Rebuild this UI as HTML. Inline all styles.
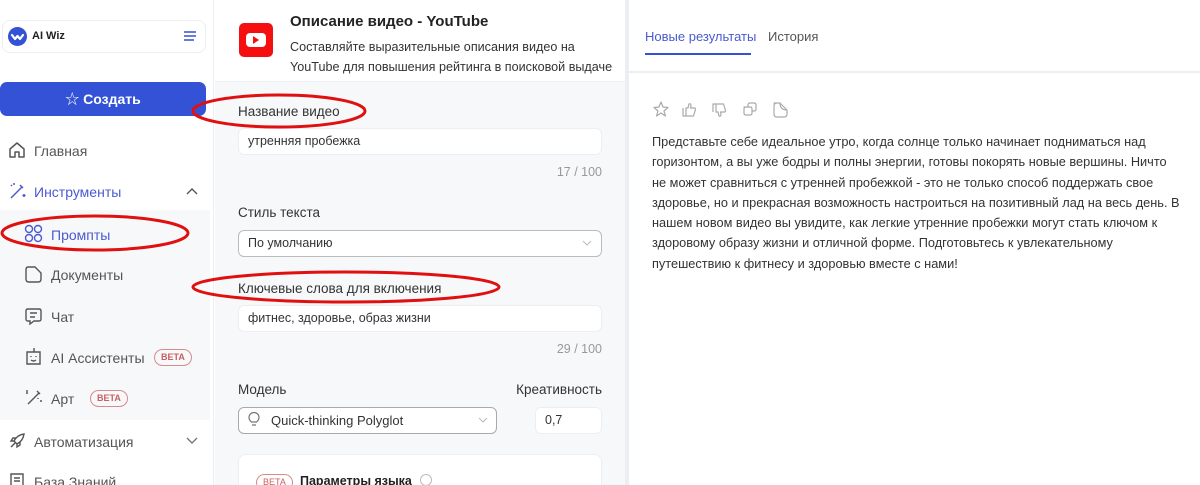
<!DOCTYPE html>
<html style="width:1200px;height:485px;overflow:hidden"><head><meta charset="utf-8"><style>
*{box-sizing:border-box;margin:0;padding:0}
body{width:1200px;height:485px;overflow:hidden;background:#fff;font-family:"Liberation Sans","Noto Sans CJK SC",sans-serif;color:#333;font-size:13px}
#w{position:relative;width:1200px;height:485px;overflow:hidden}
.abs{position:absolute}
.side{left:0;top:0;width:214px;height:485px;background:#fff;border-right:1px solid #eceef2}
.logo{left:2px;top:20px;width:204px;height:33px;border:1px solid #eceef2;border-radius:8px}
.btn{left:0;top:82px;width:206px;height:34px;background:#3452d6;border-radius:7px;color:#fff;font-weight:bold;font-size:14px;text-align:center;line-height:34px}
.sub{left:0;top:210px;width:210px;height:210px;background:#f7f8fa}
.nav{font-size:14px;color:#555}
.beta{border:1px solid #d98a8a;color:#c86060;border-radius:10px;font-size:9px;font-weight:bold;padding:2px 6px;line-height:11px}
.mid{left:215px;top:0;width:410px;height:485px;background:#f7f8fa}
.midh{left:215px;top:0;width:410px;height:82px;background:#fff;border-bottom:1px solid #eceef2}
.lbl{font-size:13.5px;color:#333}
.inp{background:#fff;border:1px solid #eceef2;border-radius:6px;height:27px;font-size:12.5px;color:#333;padding-left:9px;line-height:25px}
.cnt{font-size:12.5px;color:#999;text-align:right}
.div{left:625px;top:0;width:4px;height:485px;background:#eceef2}
.txt{left:652px;top:132px;font-size:12.75px;line-height:20.3px;color:#333}
</style></head><body><div id="w">
<div class="abs side"></div>
<div class="abs logo"></div>
<div class="abs" style="left:8px;top:27px;width:19px;height:19px;border-radius:50%;background:#3452d6"></div>
<svg class="abs" style="left:8px;top:27px" width="19" height="19"><path d="M4 8 L7 12 L9.5 9 L12 12 L15 8" stroke="#fff" stroke-width="2.2" fill="none" stroke-linecap="round" stroke-linejoin="round"/></svg>
<div class="abs" style="left:32px;top:30px;font-size:11px;font-weight:bold;color:#222">AI Wiz</div>
<svg class="abs" style="left:183px;top:30px" width="14" height="12"><path d="M1 2H13M1 6H13M1 10H11" stroke="#3452d6" stroke-width="1.5"/></svg>
<div class="abs btn"><span style="font-weight:normal">☆</span> Создать</div>
<div class="abs sub"></div>
<svg class="abs" style="left:8px;top:141px" width="18" height="18" fill="none" stroke="#555" stroke-width="1.5"><path d="M2 8L9 2L16 8V16H11V11H7V16H2Z" stroke-linejoin="round"/></svg>
<div class="abs nav" style="left:34px;top:143px">Главная</div>
<svg class="abs" style="left:8px;top:182px" width="18" height="18" fill="none" stroke="#4a5ad0" stroke-width="1.5"><path d="M3 16L14 5M12 3l3 3M3 3l1 1M6 1v2M16 12v3M14.5 13.5h3"/></svg>
<div class="abs nav" style="left:34px;top:184px;color:#4a5ad0">Инструменты</div>
<svg class="abs" style="left:186px;top:187px" width="12" height="8"><path d="M1 7L6 2L11 7" stroke="#555" fill="none" stroke-width="1.4"/></svg>
<svg class="abs" style="left:24px;top:224px" width="19" height="19" fill="none" stroke="#4a5ad0" stroke-width="1.4"><circle cx="5" cy="5" r="3.5"/><circle cx="14" cy="5" r="3.5"/><circle cx="5" cy="14" r="3.5"/><circle cx="14" cy="14" r="3.5"/></svg>
<div class="abs nav" style="left:51px;top:227px;color:#4a5ad0">Промпты</div>
<svg class="abs" style="left:24px;top:265px" width="19" height="19" fill="none" stroke="#555" stroke-width="1.4"><path d="M4 2H11L17 8V14Q17 17 14 17H5Q2 17 2 14V5Q2 2 4 2Z"/></svg>
<div class="abs nav" style="left:51px;top:267px">Документы</div>
<svg class="abs" style="left:24px;top:307px" width="19" height="19" fill="none" stroke="#555" stroke-width="1.4"><path d="M4 2H15Q17 2 17 4V12Q17 14 15 14H10L6 17V14H4Q2 14 2 12V4Q2 2 4 2ZM6 6H13M6 10H11"/></svg>
<div class="abs nav" style="left:51px;top:309px">Чат</div>
<svg class="abs" style="left:24px;top:346px" width="19" height="20" fill="none" stroke="#555" stroke-width="1.4"><path d="M10 2V6M3 6H16V18H3ZM7 10v1M12 10v1M7 14Q9.5 16 12 14"/></svg>
<div class="abs nav" style="left:51px;top:350px">AI Ассистенты</div>
<div class="abs beta" style="left:154px;top:349px">BETA</div>
<svg class="abs" style="left:24px;top:388px" width="19" height="19" fill="none" stroke="#555" stroke-width="1.4"><path d="M4 16L15 5M13 3l3 3M2 5h2M3 2v2M16 13h2M14 10v1"/></svg>
<div class="abs nav" style="left:51px;top:391px">Арт</div>
<div class="abs beta" style="left:90px;top:390px">BETA</div>
<svg class="abs" style="left:8px;top:432px" width="18" height="18" fill="none" stroke="#555" stroke-width="1.4"><path d="M3 15L7 11M16 2Q9 3 6 9L9 12Q15 9 16 2ZM6 9H3L5 6H8M9 12V15L12 13V10"/></svg>
<div class="abs nav" style="left:34px;top:434px">Автоматизация</div>
<svg class="abs" style="left:186px;top:437px" width="12" height="8"><path d="M1 1L6 6L11 1" stroke="#777" fill="none" stroke-width="1.4"/></svg>
<svg class="abs" style="left:9px;top:472px" width="16" height="13" fill="none" stroke="#555" stroke-width="1.4"><path d="M2 2H14V16H2ZM5 6H11M5 9H11"/></svg>
<div class="abs nav" style="left:34px;top:474px;height:11px;overflow:hidden;line-height:16px">База Знаний</div>

<div class="abs mid"></div>
<div class="abs midh"></div>
<div class="abs" style="left:239px;top:23px;width:34px;height:34px;background:#f41010;border-radius:5px"></div>
<div class="abs" style="left:246px;top:33px;width:20px;height:14px;background:#fff;border-radius:4px"></div>
<svg class="abs" style="left:253px;top:36px" width="7" height="8"><path d="M0 0L6 4L0 8Z" fill="#f41010"/></svg>
<div class="abs" style="left:290px;top:13px;font-size:15px;font-weight:bold;color:#222">Описание видео - YouTube</div>
<div class="abs" style="left:290px;top:37px;font-size:12.6px;line-height:20px;color:#333">Составляйте выразительные описания видео на<br>YouTube для повышения рейтинга в поисковой выдаче</div>

<div class="abs lbl" style="left:238px;top:104px">Название видео</div>
<div class="abs inp" style="left:238px;top:128px;width:364px">утренняя пробежка</div>
<div class="abs cnt" style="left:500px;top:165px;width:102px">17 / 100</div>
<div class="abs lbl" style="left:238px;top:205px">Стиль текста</div>
<div class="abs inp" style="left:238px;top:230px;width:364px;border-color:#bbb;height:27px">По умолчанию</div>
<svg class="abs" style="left:582px;top:240px" width="10" height="7"><path d="M1 1L5 5L9 1" stroke="#bbb" fill="none"/></svg>
<div class="abs lbl" style="left:238px;top:281px">Ключевые слова для включения</div>
<div class="abs inp" style="left:238px;top:305px;width:364px">фитнес, здоровье, образ жизни</div>
<div class="abs cnt" style="left:500px;top:342px;width:102px">29 / 100</div>
<div class="abs lbl" style="left:238px;top:382px">Модель</div>
<div class="abs lbl" style="left:500px;top:382px;width:102px;text-align:right">Креативность</div>
<div class="abs inp" style="left:238px;top:407px;width:259px;height:27px;border-color:#aaa;padding-left:32px;font-size:13px">Quick-thinking Polyglot</div>
<svg class="abs" style="left:248px;top:412px" width="12" height="16" fill="none" stroke="#777" stroke-width="1.2"><path d="M4 13h4M3.5 10Q1 8 1 5.5A5 5 0 0 1 11 5.5Q11 8 8.5 10Z"/></svg>
<svg class="abs" style="left:478px;top:417px" width="10" height="7"><path d="M1 1L5 5L9 1" stroke="#bbb" fill="none"/></svg>
<div class="abs inp" style="left:535px;top:407px;width:67px;height:27px">0,7</div>
<div class="abs" style="left:238px;top:454px;width:364px;height:31px;background:#fff;border:1px solid #eceef2;border-bottom:none;border-radius:8px 8px 0 0;overflow:hidden">
<div class="abs beta" style="left:17px;top:19px;font-weight:normal">BETA</div>
<div class="abs" style="left:61px;top:19px;font-size:12.5px;font-weight:bold;color:#222;line-height:14px">Параметры языка</div>
<div class="abs" style="left:181px;top:19px;width:12px;height:12px;border:1px solid #bbb;border-radius:50%"></div>
</div>

<div class="abs div"></div>
<div class="abs" style="left:629px;top:71px;width:571px;height:2px;background:#eceef2"></div>
<div class="abs" style="left:645px;top:29px;font-size:13px;color:#4a5ad0">Новые результаты</div>
<div class="abs" style="left:645px;top:53px;width:106px;height:2px;background:#3452d6"></div>
<div class="abs" style="left:768px;top:29px;font-size:13px;color:#555">История</div>
<svg class="abs" style="left:652px;top:100px" width="140" height="20" fill="none" stroke="#aaa" stroke-width="1.2" stroke-linejoin="round">
<path d="M9 2L11 7L16 7.5L12 11L13.5 16L9 13L4.5 16L6 11L2 7.5L7 7Z"/>
<path d="M31 8V16H34M34 8H36L37 4Q39 3 39 6L38.5 8H43Q44 9 43 11L41.5 16H34Z"/>
<path d="M61 12V4H64M64 12H66L67 16Q69 17 69 14L68.5 12H73Q74 11 73 9L71.5 4H64Z"/>
<path d="M96 7V5Q96 3 98 3H102Q104 3 104 5V9Q104 11 102 11H100M92 7H98Q100 7 100 9V13Q100 15 98 15H94Q92 15 92 13V9Q92 7 94 7Z"/>
<path d="M122 3H128L135 10V14Q135 17 132 17H125Q122 17 122 14V6Q122 3 125 3ZM128 3Q128 10 135 10"/>
</svg>
<div class="abs txt">Представьте себе идеальное утро, когда солнце только начинает подниматься над<br>горизонтом, а вы уже бодры и полны энергии, готовы покорять новые вершины. Ничто<br>не может сравниться с утренней пробежкой - это не только способ поддержать свое<br>здоровье, но и прекрасная возможность настроиться на позитивный лад на весь день. В<br>нашем новом видео вы увидите, как легкие утренние пробежки могут стать ключом к<br>здоровому образу жизни и отличной форме. Подготовьтесь к увлекательному<br>путешествию к фитнесу и здоровью вместе с нами!</div>

<svg class="abs" style="left:0;top:0" width="1200" height="485" fill="none" stroke="#e01010" stroke-width="3">
<ellipse cx="279" cy="111" rx="86" ry="16"/>
<ellipse cx="95" cy="233" rx="93" ry="17"/>
<ellipse cx="346" cy="287" rx="153" ry="15"/>
</svg>
</div></body></html>
